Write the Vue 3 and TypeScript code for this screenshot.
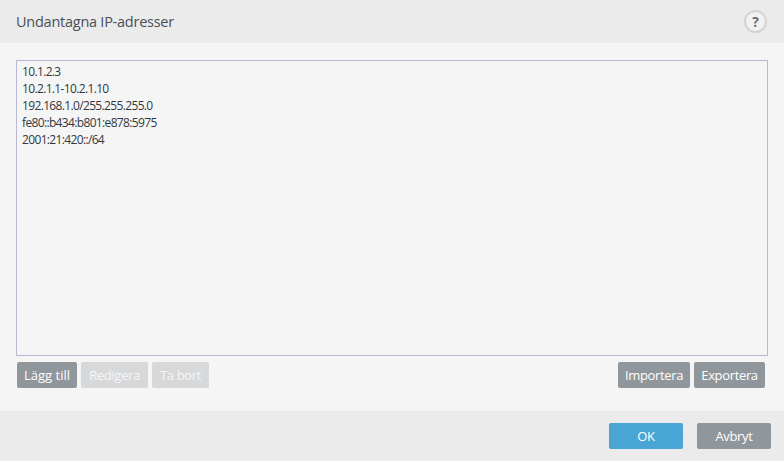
<script setup lang="ts">
const entries: string[] = ['10.1.2.3', '10.2.1.1-10.2.1.10', '192.168.1.0/255.255.255.0', 'fe80::b434:b801:e878:5975', '2001:21:420::/64']
</script>

<template>
  <div class="dialog">
    <header class="head">
      <h1 class="title">Undantagna IP-adresser</h1>
      <span class="help">?</span>
    </header>
    <main class="body">
      <div class="list">
        <div v-for="e in entries" :key="e" class="row">{{ e }}</div>
      </div>
      <div class="actions">
        <div class="group">
          <button class="btn w60">Lägg till</button>
          <button class="btn off w67">Redigera</button>
          <button class="btn off w57">Ta bort</button>
        </div>
        <div class="group">
          <button class="btn w72">Importera</button>
          <button class="btn w71">Exportera</button>
        </div>
      </div>
    </main>
    <footer class="foot">
      <button class="btn ok">OK</button>
      <button class="btn cancel">Avbryt</button>
    </footer>
  </div>
</template>

<style>
html, body { margin: 0; background: #f5f5f5; }
</style>

<style scoped>
.dialog { width: 784px; height: 461px; display: flex; flex-direction: column; font-family: "Open Sans", "Noto Sans", sans-serif; background: #f5f5f5; overflow: hidden; }
.head { height: 43px; flex: none; background: #ebebeb; display: flex; align-items: center; justify-content: space-between; padding: 0 17px 0 16px; box-sizing: border-box; }
.title { margin: 0; font-size: 14.5px; font-weight: 400; color: #4a5058; letter-spacing: -0.25px; }
.help { width: 19px; height: 19px; border: 2px solid #d4d4d4; border-radius: 50%; display: flex; align-items: center; justify-content: center; font-size: 14px; font-weight: 700; color: #6a6f75; background: #f2f2f2; }
.body { flex: 1; padding: 17px 16px 0; box-sizing: border-box; display: flex; flex-direction: column; }
.list { height: 296px; box-sizing: border-box; border: 1px solid #b9b8d0; padding: 2px 5px; font-size: 12px; line-height: 17px; color: #33383e; }
.row { white-space: nowrap; letter-spacing: -0.65px; }
.actions { display: flex; justify-content: space-between; margin-top: 6px; padding: 0 3px 0 1px; }
.group { display: flex; gap: 4px; }
.btn { height: 26px; padding: 0 0 1px; border: 0; border-radius: 2px; background: #8f969c; color: #fff; font: inherit; font-size: 13px; letter-spacing: -0.35px; }
.off { background: #d7d8da; color: #f5f5f5; }
.w60 { width: 60px; letter-spacing: 0; }
.w67 { width: 67px; }
.w57 { width: 57px; }
.w72 { width: 72px; }
.w71 { width: 71px; }
.foot { height: 50px; flex: none; background: #ebebeb; display: flex; justify-content: flex-end; align-items: center; gap: 14px; padding: 0 13px 0 0; box-sizing: border-box; }
.ok, .cancel { width: 74px; }
.ok { background: #49a5d4; }
</style>
